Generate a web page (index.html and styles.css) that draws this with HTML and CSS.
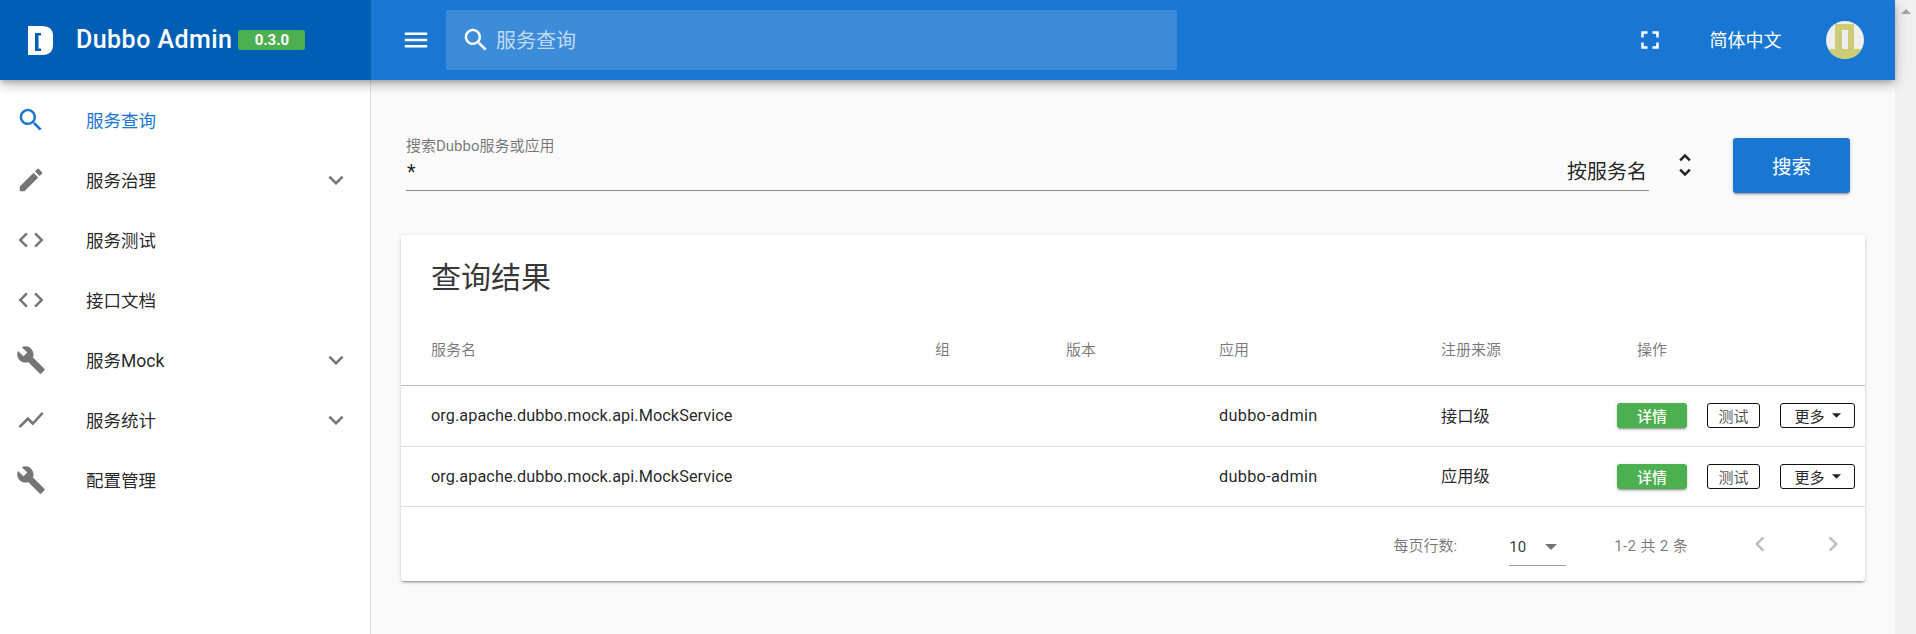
FILE: index.html
```html
<!DOCTYPE html>
<html lang="zh-CN">
<head>
<meta charset="utf-8">
<title>Dubbo Admin</title>
<link rel="stylesheet" href="styles.css">
</head>
<body>
<div class="app">
  <header class="topbar">
    <div class="brand">
      <svg class="logo" viewBox="0 0 25 29"><path fill-rule="evenodd" d="M0 0H14Q25 0 25 10V19Q25 29 14 29H0ZM7 7V25H13V22.5H10.5V9.5H13V7Z"/></svg>
      <span class="brand-name">Dubbo Admin</span>
      <span class="chip">0.3.0</span>
    </div>
    <div class="toolbar">
      <svg class="icon menu-icon" viewBox="0 0 24 24"><path d="M3 18h18v-2H3v2zm0-5h18v-2H3v2zm0-7v2h18V6H3z"/></svg>
      <div class="top-search">
        <svg class="icon" viewBox="0 0 24 24"><path d="M15.5 14h-.79l-.28-.27C15.41 12.59 16 11.11 16 9.5 16 5.91 13.09 3 9.5 3S3 5.91 3 9.5 5.91 16 9.5 16c1.61 0 3.09-.59 4.23-1.57l.27.28v.79l5 4.99L20.49 19l-4.99-5zm-6 0C7.01 14 5 11.99 5 9.5S7.01 5 9.5 5 14 7.01 14 9.5 11.99 14 9.5 14z"/></svg>
        <span class="top-placeholder">服务查询</span>
      </div>
      <svg class="icon full-icon" viewBox="0 0 24 24"><path d="M7 14H5v5h5v-2H7v-3zm-2-4h2V7h3V5H5v5zm12 7h-3v2h5v-5h-2v3zM14 5v2h3v3h2V5h-5z"/></svg>
      <span class="lang">简体中文</span>
      <svg class="avatar" viewBox="0 0 38 38"><defs><clipPath id="avatar-clip"><circle cx="19" cy="19" r="19"/></clipPath></defs><g clip-path="url(#avatar-clip)"><rect width="38" height="38" fill="#eeeeee"/><path fill="#cccc77" fill-rule="evenodd" d="M9 3H28V28H38V38H0V28H9ZM16 9V28H22V9Z"/></g></svg>
    </div>
  </header>
  <div class="body">
    <nav class="drawer">
      <a class="nav-item active"><svg class="icon" viewBox="0 0 24 24"><path d="M15.5 14h-.79l-.28-.27C15.41 12.59 16 11.11 16 9.5 16 5.91 13.09 3 9.5 3S3 5.91 3 9.5 5.91 16 9.5 16c1.61 0 3.09-.59 4.23-1.57l.27.28v.79l5 4.99L20.49 19l-4.99-5zm-6 0C7.01 14 5 11.99 5 9.5S7.01 5 9.5 5 14 7.01 14 9.5 11.99 14 9.5 14z"/></svg><span class="nav-label">服务查询</span></a>
      <a class="nav-item"><svg class="icon" viewBox="0 0 24 24"><path d="M3 17.25V21h3.75L17.81 9.94l-3.75-3.75L3 17.25zM20.71 7.04c.39-.39.39-1.02 0-1.41l-2.34-2.34c-.39-.39-1.02-.39-1.41 0l-1.83 1.83 3.75 3.75 1.83-1.83z"/></svg><span class="nav-label">服务治理</span><svg class="icon" viewBox="0 0 24 24"><path d="M7.41 8.59L12 13.17l4.59-4.58L18 10l-6 6-6-6 1.41-1.41z"/></svg></a>
      <a class="nav-item"><svg class="icon" viewBox="0 0 24 24"><path d="M9.4 16.6L4.8 12l4.6-4.6L8 6l-6 6 6 6 1.4-1.4zm5.2 0l4.6-4.6-4.6-4.6L16 6l6 6-6 6-1.4-1.4z"/></svg><span class="nav-label">服务测试</span></a>
      <a class="nav-item"><svg class="icon" viewBox="0 0 24 24"><path d="M9.4 16.6L4.8 12l4.6-4.6L8 6l-6 6 6 6 1.4-1.4zm5.2 0l4.6-4.6-4.6-4.6L16 6l6 6-6 6-1.4-1.4z"/></svg><span class="nav-label">接口文档</span></a>
      <a class="nav-item"><svg class="icon" viewBox="0 0 24 24"><path d="M22.7 19l-9.1-9.1c.9-2.3.4-5-1.5-6.9-2-2-5-2.4-7.4-1.3L9 6 6 9 1.6 4.7C.4 7.1.9 10.1 2.9 12.1c1.9 1.9 4.6 2.4 6.9 1.5l9.1 9.1c.4.4 1 .4 1.4 0l2.3-2.3c.5-.4.5-1.1.1-1.4z"/></svg><span class="nav-label">服务Mock</span><svg class="icon" viewBox="0 0 24 24"><path d="M7.41 8.59L12 13.17l4.59-4.58L18 10l-6 6-6-6 1.41-1.41z"/></svg></a>
      <a class="nav-item"><svg class="icon" viewBox="0 0 24 24"><path d="M3.5 18.49l6-6.01 4 4L22 6.92l-1.41-1.41-7.09 7.97-4-4L2 16.99z"/></svg><span class="nav-label">服务统计</span><svg class="icon" viewBox="0 0 24 24"><path d="M7.41 8.59L12 13.17l4.59-4.58L18 10l-6 6-6-6 1.41-1.41z"/></svg></a>
      <a class="nav-item"><svg class="icon" viewBox="0 0 24 24"><path d="M22.7 19l-9.1-9.1c.9-2.3.4-5-1.5-6.9-2-2-5-2.4-7.4-1.3L9 6 6 9 1.6 4.7C.4 7.1.9 10.1 2.9 12.1c1.9 1.9 4.6 2.4 6.9 1.5l9.1 9.1c.4.4 1 .4 1.4 0l2.3-2.3c.5-.4.5-1.1.1-1.4z"/></svg><span class="nav-label">配置管理</span></a>
    </nav>
    <main class="main">
      <section class="search-row">
        <div class="field">
          <label class="field-label">搜索Dubbo服务或应用</label>
          <div class="field-input"><span class="field-value">*</span><span class="field-select">按服务名</span></div>
        </div>
        <svg class="icon unfold" viewBox="0 0 24 24"><path d="M12 5.83L15.17 9l1.41-1.41L12 3 7.41 7.59 8.83 9 12 5.83zm0 12.34L8.83 15l-1.41 1.41L12 21l4.59-4.59L15.17 15 12 18.17z"/></svg>
        <button class="search-btn">搜索</button>
      </section>
      <section class="card">
        <h2 class="card-title">查询结果</h2>
        <table class="table">
          <colgroup><col class="c1"><col class="c2"><col class="c3"><col class="c4"><col class="c5"><col class="c6"></colgroup>
          <thead>
            <tr><th>服务名</th><th>组</th><th>版本</th><th>应用</th><th>注册来源</th><th>操作</th></tr>
          </thead>
          <tbody>
            <tr>
              <td class="service">org.apache.dubbo.mock.api.MockService</td><td></td><td></td><td class="app-name">dubbo-admin</td><td class="source">接口级</td>
              <td class="actions"><div class="action-row"><button class="btn-detail">详情</button><button class="btn-plain btn-test">测试</button><button class="btn-plain btn-more">更多<svg class="caret" viewBox="0 0 10 5"><path d="M0 0h10L5 5z"/></svg></button></div></td>
            </tr>
            <tr>
              <td class="service">org.apache.dubbo.mock.api.MockService</td><td></td><td></td><td class="app-name">dubbo-admin</td><td class="source">应用级</td>
              <td class="actions"><div class="action-row"><button class="btn-detail">详情</button><button class="btn-plain btn-test">测试</button><button class="btn-plain btn-more">更多<svg class="caret" viewBox="0 0 10 5"><path d="M0 0h10L5 5z"/></svg></button></div></td>
            </tr>
          </tbody>
        </table>
        <footer class="pager">
          <span class="pager-label">每页行数:</span>
          <div class="pager-select"><span>10</span><svg class="pager-caret" viewBox="0 0 12 6"><path d="M0 0h12L6 6z"/></svg></div>
          <span class="pager-range">1-2 共 2 条</span>
          <svg class="icon pager-prev" viewBox="0 0 24 24"><path d="M15.41 7.41L14 6l-6 6 6 6 1.41-1.41L10.83 12z"/></svg>
          <svg class="icon pager-next" viewBox="0 0 24 24"><path d="M10 6L8.59 7.41 13.17 12l-4.58 4.59L10 18l6-6z"/></svg>
        </footer>
      </section>
    </main>
  </div>
</div>
<aside class="scrollbar"><span class="scroll-up"></span></aside>
</body>
</html>
```
FILE: styles.css
```css
* { box-sizing: border-box; }
html, body { margin: 0; height: 100%; }
body {
  display: flex;
  height: 634px;
  overflow: hidden;
  background: #fafafa;
  color: rgba(0, 0, 0, .87);
  font-family: Roboto, "Noto Sans CJK SC", sans-serif;
}
.app { flex: 1; min-width: 0; display: flex; flex-direction: column; }
.scrollbar { width: 21px; background: #f1f1f1; display: flex; justify-content: center; padding-top: 9px; }
.scroll-up { width: 0; height: 0; border-left: 5px solid transparent; border-right: 5px solid transparent; border-bottom: 5px solid #a3a3a3; }
.icon { width: 30px; height: 30px; flex: none; fill: currentColor; display: block; }

/* Top bar */
.topbar {
  position: relative;
  z-index: 2;
  display: flex;
  height: 80px;
  flex: none;
  color: #fff;
  box-shadow: 0 3px 5px -1px rgba(0,0,0,.2), 0 6px 10px 0 rgba(0,0,0,.14), 0 1px 18px 0 rgba(0,0,0,.12);
}
.brand {
  width: 371px;
  flex: none;
  display: flex;
  align-items: center;
  padding-left: 28px;
  background: #005fb5;
  border-right: 1px solid #0a5ba8;
}
.logo { width: 25px; height: 29px; fill: #fff; flex: none; }
.brand-name { margin-left: 23px; font-size: 25px; font-weight: 500; line-height: 30px; letter-spacing: .45px; }
.chip {
  margin-left: 6px;
  width: 67px;
  height: 20px;
  border-radius: 2px;
  background: #4caf50;
  font-size: 15px;
  font-weight: 700;
  line-height: 20px;
  text-align: center;
}
.toolbar { flex: 1; display: flex; align-items: center; background: #1976d2; }
.menu-icon { margin-left: 30px; }
.top-search {
  margin-left: 15px;
  width: 731px;
  height: 60px;
  display: flex;
  align-items: center;
  padding-left: 15px;
  gap: 5px;
  border-radius: 2px;
  background: rgba(255, 255, 255, .16);
}
.top-placeholder { font-size: 20px; padding-bottom: 2px; color: rgba(255, 255, 255, .7); }
.full-icon { margin-left: 458px; }
.lang { margin-left: 44.5px; padding-bottom: 2px; font-size: 18px; }
.avatar { width: 38px; height: 38px; margin-left: 44.5px; flex: none; }

/* Layout */
.body { flex: 1; display: flex; min-height: 0; }
.drawer { width: 371px; flex: none; background: #fff; border-right: 1px solid #e0e0e0; padding-top: 10px; }
.main { flex: 1; min-width: 0; padding: 58px 30px 0; }

/* Sidebar */
.nav-item { display: flex; align-items: center; height: 60px; padding: 0 19px 0 16px; color: rgba(0, 0, 0, .54); }
.nav-label { flex: 1; margin-left: 40px; padding-bottom: 2px; font-size: 17.5px; color: rgba(0, 0, 0, .87); }
.active, .active .nav-label { color: #1976d2; }

/* Search row */
.search-row { display: flex; align-items: flex-start; padding: 0 15px 0 5px; }
.field { flex: 1; height: 53px; border-bottom: 1px solid #8c8c8c; }
.field-label { display: block; font-size: 15px; line-height: 16px; color: rgba(0, 0, 0, .54); }
.field-input { display: flex; justify-content: space-between; align-items: center; height: 30px; margin-top: 2px; padding: 0 2px 0 1px; font-size: 20px; }
.field-value { padding-top: 2px; }
.field-select { padding-bottom: 2px; }
.unfold { margin: 12px 0 0 21px; color: rgba(0, 0, 0, .87); }
.search-btn {
  margin-left: 33px;
  width: 117px;
  height: 55px;
  border: 0;
  border-radius: 3px;
  background: #1976d2;
  color: #fff;
  font: inherit;
  font-size: 19.5px;
  box-shadow: 0 3px 1px -2px rgba(0,0,0,.2), 0 2px 2px 0 rgba(0,0,0,.14), 0 1px 5px 0 rgba(0,0,0,.12);
}

/* Card */
.card {
  margin-top: 42px;
  background: #fff;
  border-radius: 3px;
  box-shadow: 0 3px 1px -2px rgba(0,0,0,.2), 0 2px 2px 0 rgba(0,0,0,.14), 0 1px 5px 0 rgba(0,0,0,.12);
}
.card-title { margin: 0; height: 77px; padding: 3px 30px 0; display: flex; align-items: center; font-size: 30px; font-weight: 400; color: rgba(0, 0, 0, .8); }
.table { width: 100%; border-collapse: separate; border-spacing: 0; table-layout: fixed; }
.c1 { width: 504px; }
.c2 { width: 131px; }
.c3 { width: 153px; }
.c4 { width: 222px; }
.c5 { width: 196px; }
.c6 { width: 258px; }
.table th { height: 74px; padding: 0 0 0 30px; text-align: left; font-size: 15px; font-weight: 400; color: rgba(0, 0, 0, .54); border-bottom: 1px solid #bdbdbd; }
.table td { height: 60.5px; padding: 0 0 0 30px; font-size: 16.25px; border-bottom: 1px solid #e0e0e0; }
.table td.service { letter-spacing: .07px; }
.table td.app-name { letter-spacing: .3px; }
.table td.source { padding-bottom: 2px; }
.table td.actions { padding-left: 10px; }
.action-row { display: flex; gap: 20px; }
.btn-detail, .btn-plain { height: 25px; padding: 0; font: inherit; font-size: 15px; border-radius: 3px; }
.btn-detail {
  width: 70px;
  border: 0;
  background: #4caf50;
  color: #fff;
  font-weight: 500;
  box-shadow: 0 3px 1px -2px rgba(0,0,0,.2), 0 2px 2px 0 rgba(0,0,0,.14), 0 1px 5px 0 rgba(0,0,0,.12);
}
.btn-plain { background: #fff; border: 1px solid #111; }
.btn-test { width: 53px; color: rgba(0, 0, 0, .7); }
.btn-more { width: 75px; display: flex; align-items: center; justify-content: center; gap: 7px; color: rgba(0, 0, 0, .87); }
.caret { width: 9px; height: 5px; fill: #212121; }

/* Pagination */
.pager { display: flex; align-items: center; height: 74px; padding-right: 17px; justify-content: flex-end; font-size: 15px; color: rgba(0, 0, 0, .54); }
.pager-select { display: flex; align-items: center; justify-content: space-between; width: 57px; height: 36px; margin: 7px 0 0 52px; padding: 0 9px 0 0; border-bottom: 1px solid #9e9e9e; color: rgba(0, 0, 0, .8); }
.pager-caret { width: 12px; height: 6px; fill: rgba(0, 0, 0, .54); }
.pager-range { margin-left: 48px; letter-spacing: .35px; }
.pager-prev { margin-left: 57px; color: rgba(0, 0, 0, .26); }
.pager-next { margin-left: 43px; color: rgba(0, 0, 0, .26); }
```
